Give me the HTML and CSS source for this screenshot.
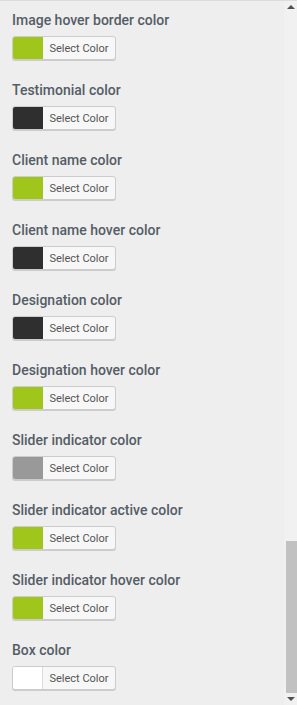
FILE: index.html
```html
<!DOCTYPE html>
<html>
<head>
<meta charset="utf-8">
<link rel="stylesheet" href="styles.css">
</head>
<body>
<div class="frame">
  <div class="panel">
    <div class="control">
      <div class="title">Image hover border color</div>
      <button class="picker"><span class="swatch green"></span><span class="label">Select Color</span></button>
    </div>
    <div class="control">
      <div class="title">Testimonial color</div>
      <button class="picker"><span class="swatch dark"></span><span class="label">Select Color</span></button>
    </div>
    <div class="control">
      <div class="title">Client name color</div>
      <button class="picker"><span class="swatch green"></span><span class="label">Select Color</span></button>
    </div>
    <div class="control">
      <div class="title">Client name hover color</div>
      <button class="picker"><span class="swatch dark"></span><span class="label">Select Color</span></button>
    </div>
    <div class="control">
      <div class="title">Designation color</div>
      <button class="picker"><span class="swatch dark"></span><span class="label">Select Color</span></button>
    </div>
    <div class="control">
      <div class="title">Designation hover color</div>
      <button class="picker"><span class="swatch green"></span><span class="label">Select Color</span></button>
    </div>
    <div class="control">
      <div class="title">Slider indicator color</div>
      <button class="picker"><span class="swatch gray"></span><span class="label">Select Color</span></button>
    </div>
    <div class="control">
      <div class="title">Slider indicator active color</div>
      <button class="picker"><span class="swatch green"></span><span class="label">Select Color</span></button>
    </div>
    <div class="control">
      <div class="title">Slider indicator hover color</div>
      <button class="picker"><span class="swatch green"></span><span class="label">Select Color</span></button>
    </div>
    <div class="control">
      <div class="title">Box color</div>
      <button class="picker"><span class="swatch white"></span><span class="label">Select Color</span></button>
    </div>
  </div>
  <div class="scrollbar">
    <div class="arrow up"></div>
    <div class="track"><div class="thumb"></div></div>
    <div class="arrow down"></div>
  </div>
</div>
</body>
</html>
```

FILE: styles.css
```css
* { box-sizing: border-box; }
html, body {
  margin: 0;
  padding: 0;
  width: 297px;
  height: 705px;
  overflow: hidden;
  background: #eeeeee;
}
.frame {
  display: flex;
  height: 705px;
  border-top: 1px solid #dcdcdc;
}
.panel {
  flex: 1;
  padding: 9px 0 0 12px;
}
.control {
  height: 70px;
}
.title {
  font-family: Roboto, "Liberation Sans", sans-serif;
  font-size: 14px;
  font-weight: 500;
  line-height: 20px;
  color: #555d66;
  margin-bottom: 6px;
}
.picker {
  display: flex;
  align-items: stretch;
  height: 24px;
  width: 104px;
  padding: 0;
  margin: 0;
  border: 1px solid #cccccc;
  border-radius: 3px;
  background: #f7f7f7;
  box-shadow: 0 1px 0 #cccccc;
  overflow: hidden;
  cursor: pointer;
}
.swatch {
  width: 30px;
  flex: none;
  border-right: 1px solid #dddddd;
}
.swatch.green { background: #a0c51b; border-right-color: #a0c51b; }
.swatch.dark { background: #2f2f2f; border-right-color: #2f2f2f; }
.swatch.gray { background: #999999; border-right-color: #999999; }
.swatch.white { background: #ffffff; border-right-color: #dddddd; }
.label {
  flex: 1;
  display: flex;
  align-items: center;
  justify-content: center;
  font-family: Roboto, "Liberation Sans", sans-serif;
  font-size: 11px;
  color: #555555;
}
.scrollbar {
  width: 13px;
  flex: none;
  display: flex;
  flex-direction: column;
  background: #f1f1f1;
}
.arrow {
  height: 12px;
  display: flex;
  justify-content: center;
  align-items: center;
  flex: none;
}
.arrow.up::before {
  content: "";
  border-left: 4px solid transparent;
  border-right: 4px solid transparent;
  border-bottom: 4px solid #505050;
}
.arrow.down::before {
  content: "";
  border-left: 4px solid transparent;
  border-right: 4px solid transparent;
  border-top: 4px solid #505050;
}
.track {
  flex: 1;
  display: flex;
  flex-direction: column;
  justify-content: flex-end;
  padding-left: 2px;
}
.thumb {
  height: 152px;
  background: #c1c1c1;
}
```
